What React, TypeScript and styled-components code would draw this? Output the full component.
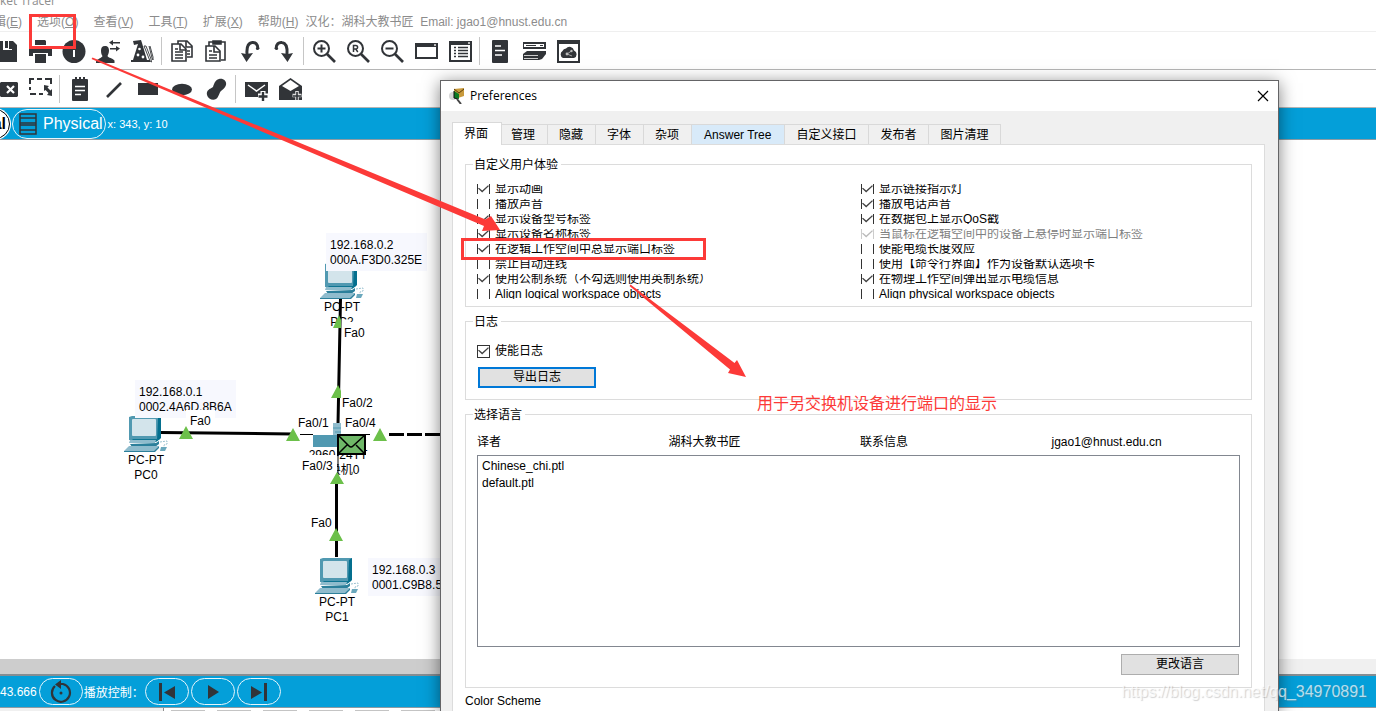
import React from 'react';
import styled, { createGlobalStyle, css } from 'styled-components';

const INK = '#313438';
const BLUE = '#049fd9';
const RED = '#fc3a38';
const SANS = '"Liberation Sans", "Noto Sans CJK SC", sans-serif';

const GlobalStyle = createGlobalStyle`
  * { box-sizing: border-box; }
  body { margin: 0; font-family: ${SANS}; font-size: 12px; color: #000; background: #fff; }
  button, input, select { font: inherit; color: inherit; margin: 0; }
`;

const Screen = styled.div`
  position: relative;
  display: flex;
  flex-direction: column;
  height: 100vh;
  overflow: hidden;
`;

/* ---------- main window ---------- */

const WindowTitle = styled.div`
  flex: none;
  display: flex;
  align-items: flex-end;
  height: 11px;
  overflow: hidden;
  font: 12px/20px "Open Sans", sans-serif;
  color: #8f8f8f;
`;

const MenuBar = styled.nav`
  flex: none;
  display: flex;
  align-items: center;
  gap: 15px;
  height: 21px;
  margin-left: -18px;
  padding-top: 2px;
  line-height: 18px;
  white-space: nowrap;
  color: #8c8c8c;
  border-bottom: 1px solid #efefef;
`;

const MenuButton = styled.button`
  padding: 0;
  border: 0;
  background: none;
`;

const Credits = styled.span`
  margin-left: -8px;
  white-space: pre;
`;

const ToolBar = styled.div`
  flex: none;
  display: flex;
  align-items: center;
  height: 38px;
  margin-left: -6px;
  border-bottom: 1px solid #b5b5b5;
`;

const ToolGroup = styled.div`
  display: flex;
  align-items: center;
  gap: 10px;
  height: 28px;
  padding-right: 7px;
  & + & { padding-left: 8px; border-left: 1px solid #c6c6c6; }
`;

const ToolButton = styled.button`
  width: 24px;
  height: 24px;
  padding: 0;
  border: 0;
  background: none;
  svg { display: block; }
`;

const WorkspaceBar = styled.div`
  flex: none;
  display: flex;
  align-items: center;
  gap: 2px;
  height: 32px;
  background: ${BLUE};
  border-bottom: 1px solid #8d9ba3;
  color: #fff;
`;

const ModeButton = styled.button<{ $active?: boolean }>`
  display: flex;
  align-items: center;
  gap: 6px;
  height: 30px;
  padding: 0 2px 0 6px;
  border: 1px solid #e6f5fb;
  border-radius: 15px;
  background: none;
  font-size: 16px;
  ${p => p.$active && css`
    width: 90px;
    margin-left: -80px;
    padding-right: 3px;
    justify-content: flex-end;
    background: #fff;
    border-color: #000;
    box-shadow: 0 0 0 1px #fff;
    color: #000;
    font-weight: bold;
  `}
`;

const Coordinates = styled.span`
  font-size: 11px;
`;

const Canvas = styled.main`
  position: relative;
  flex: 1;
  overflow: hidden;
`;

const Links = styled.svg`
  position: absolute;
  top: 0;
  left: 0;
`;

const Device = styled.div<{ $x: number; $y: number }>`
  position: absolute;
  left: ${p => p.$x}px;
  top: ${p => p.$y}px;
  display: flex;
  flex-direction: column;
  align-items: center;
  width: 44px;
  line-height: 15px;
  white-space: nowrap;
  svg { display: block; margin-bottom: 1px; }
`;

const Note = styled.div<{ $x: number; $y: number }>`
  position: absolute;
  left: ${p => p.$x}px;
  top: ${p => p.$y}px;
  width: 101px;
  padding: 5px 4px 3px;
  line-height: 15px;
  white-space: nowrap;
  background: #f7f8fe;
`;

const Port = styled.span<{ $x: number; $y: number }>`
  position: absolute;
  left: ${p => p.$x}px;
  top: ${p => p.$y}px;
  padding: 0 4px;
  line-height: 22px;
  background: #fff;
`;

const ScrollTrack = styled.div`
  flex: none;
  height: 15px;
  background: #f0f0f0;
`;

const ScrollThumb = styled.div`
  width: 60%;
  height: 100%;
  background: #cdcdcd;
`;

const PlayBar = styled.div`
  flex: none;
  display: flex;
  align-items: center;
  gap: 2px;
  height: 33px;
  border-top: 2px solid #858d92;
  background: ${BLUE};
  color: #fff;
  white-space: nowrap;
`;

const RoundButton = styled.button`
  display: flex;
  align-items: center;
  justify-content: center;
  width: 44px;
  height: 27px;
  padding: 0;
  border: 1px solid #e6f5fb;
  border-radius: 14px;
  background: none;
`;

const PlayLabel = styled.span`
  width: 59px;
  margin-left: -1px;
`;

const DeviceTray = styled.div`
  flex: none;
  display: flex;
  height: 4px;
  border-top: 1px solid #8d9ba3;
`;

const TrayInfo = styled.div`
  width: 164px;
  background: #f0f0f0;
  border-right: 1px solid #8d8d8d;
`;

const TraySlots = styled.div`
  display: flex;
  align-items: flex-end;
  gap: 12px;
  padding-left: 7px;
`;

const Slot = styled.i`
  width: 34px;
  height: 1px;
  background: #c4c4c4;
`;

/* ---------- preferences window ---------- */

const Dialog = styled.section`
  position: absolute;
  top: 80px;
  right: 97px;
  bottom: 0;
  left: 440px;
  overflow: hidden;
  border: 1px solid #646466;
  border-bottom: 0;
  background: #f0f0f0;
  box-shadow: 0 3px 16px rgba(0, 0, 0, 0.5);
`;

const DialogTitle = styled.header`
  display: flex;
  align-items: center;
  gap: 5px;
  height: 30px;
  padding: 0 9px 0 8px;
  background: #fff;
  font: 12px/30px "Open Sans", "Noto Sans", sans-serif;
`;

const CloseButton = styled.button`
  display: flex;
  margin-left: auto;
  padding: 0;
  border: 0;
  background: none;
`;

const Tabs = styled.div`
  display: flex;
  align-items: flex-end;
  padding: 11px 0 0 11px;
`;

const Tab = styled.button<{ $hover?: boolean }>`
  height: 20px;
  padding: ${p => (p.$hover ? '1px 13px 0 12px' : '1px 12px 0 11px')};
  border: solid #d9d9d9;
  border-width: 1px 1px 0 0;
  background: ${p => (p.$hover ? '#d8eaf9' : '#f0f0f0')};
  line-height: 18px;
  &[aria-selected='true'] {
    position: relative;
    height: 23px;
    margin: 0 -2px -1px 0;
    padding: 0 13px 1px 11px;
    border-left-width: 1px;
    background: #fff;
  }
`;

const Panel = styled.div`
  margin: 0 13px 0 11px;
  padding: 10px 12px;
  border: 1px solid #dcdcdc;
  background: #fff;
`;

const Group = styled.fieldset<{ $top: number; $bottom: number }>`
  min-width: 0;
  margin: 0 0 5px;
  padding: ${p => p.$top}px 11px ${p => p.$bottom}px;
  border: 1px solid #dcdcdc;
`;

const Legend = styled.legend`
  margin-left: -4px;
  padding: 2px 3px 0 1px;
  line-height: 16px;
`;

const Options = styled.div`
  display: grid;
  grid-template-columns: 1fr 1fr;
  gap: 5px;
`;

const CheckLabel = styled.label<{ $clipped?: boolean; $disabled?: boolean }>`
  display: flex;
  align-items: center;
  gap: 5px;
  height: ${p => (p.$clipped ? 10 : 16)}px;
  overflow: hidden;
  line-height: 16px;
  white-space: nowrap;
  color: ${p => (p.$disabled ? '#808080' : '#000')};
`;

const Check = styled.input`
  appearance: none;
  flex: none;
  display: grid;
  place-content: center;
  width: 13px;
  height: 13px;
  border: 1px solid #333;
  background: #fff;
  &:checked::before {
    content: '';
    width: 11px;
    height: 9px;
    background: #444;
    clip-path: polygon(0 45%, 9% 36%, 38% 68%, 91% 8%, 100% 18%, 38% 90%);
  }
  &:disabled { border-color: #ccc; }
  &:disabled::before { background: #bbb; }
`;

const PushButton = styled.button<{ $focused?: boolean }>`
  display: block;
  width: 118px;
  height: 21px;
  padding: 0;
  border: ${p => (p.$focused ? '2px solid #0078d7' : '1px solid #adadad')};
  background: #e1e1e1;
  line-height: 17px;
`;

const LogActions = styled.div`
  padding: 8px 1px 0;
`;

const Translator = styled.div`
  display: grid;
  grid-template-columns: repeat(4, 1fr);
  gap: 3px;
  margin-bottom: 5px;
  line-height: 16px;
`;

const LanguageList = styled.select`
  display: block;
  width: 100%;
  height: 192px;
  padding: 2px 0;
  overflow: hidden;
  border: 1px solid #828790;
  border-radius: 0;
  background: #fff;
  outline: 0;
  option { padding: 1px 4px 0; height: 17px; line-height: 16px; }
`;

const LanguageActions = styled.div`
  display: flex;
  justify-content: flex-end;
  padding: 7px 1px 0;
`;

const SectionTitle = styled.div`
  line-height: 16px;
`;

/* ---------- marks over the page ---------- */

const Marks = styled.svg`
  position: absolute;
  top: 0;
  left: 0;
  pointer-events: none;
`;

const Remark = styled.p`
  position: absolute;
  top: 392px;
  left: 757px;
  margin: 0;
  color: ${RED};
  font-size: 16px;
  line-height: 24px;
`;

const Watermark = styled.span`
  position: absolute;
  right: 9px;
  bottom: 8px;
  font-size: 16px;
  line-height: 22px;
  color: rgba(255, 255, 255, 0.7);
  text-shadow: 1px 1px 1px rgba(120, 120, 120, 0.35);
`;

/* ---------- icons, all on a 24px grid ---------- */

const icons: Record<string, React.ReactNode> = {
  save: (<>
    <path d="M1 2h18l4 4v17H1z" /><path d="M9 2h9v9H9z" fill="#fff" /><path d="M11 2h3v7h-3zM15 2h3v8h-3z" />
  </>),
  print: (<>
    <path d="M7 1h10l1 1v4H7z" /><path d="M1 7h23v10H1z" />
    <path d="M5 14h15v3H5z" fill="#fff" /><path d="M7 15h11v9H7z" /><circle cx="21" cy="9" r="1" fill="#fff" />
  </>),
  info: (<>
    <circle cx="12" cy="12.500" r="11.500" /><path d="M11 6h2v3h-2zM11 11h2v7h-2z" fill="#fff" />
  </>),
  user: (<>
    <path d="M9 7c3 0 4 2 4 4.500S12 16 11.500 17c1 2 5 2 7 4.500V24H0v-1.500C1 20 6 19 6.500 17 5.500 16 5 14 5 11.500S6 7 9 7z" />
    <path d="M13 3.500l4-2.500v2h7v1.500h-7v2zM24 9.500l-4-2.500v2h-6v1.500h6v2z" />
  </>),
  custom: (<>
    <path d="M3 2l8-1 1 3 5 17h3v2H1v-2h2l5-16-4 1z" />
    <circle cx="9.500" cy="10" r="1.300" fill="#fff" /><circle cx="8" cy="16" r="1.400" fill="#fff" /><circle cx="13" cy="18" r="1.400" fill="#fff" />
    <path d="M14 7l6 15 1.500 1-.5-3-5-13zM19 7l3 12 1 2v-3L20 7" fill="none" stroke={INK} strokeWidth=".9" />
  </>),
  copy: (
    <g fill="none" stroke={INK} strokeWidth="1.600">
      <path d="M8 5V2h9l5 5v11h-5" /><path d="M16 2v6h6" /><path d="M2 5h9l5 5v12H2z" fill="#fff" /><path d="M10 5v6h6M5 10h3M5 13h8M5 16h8M5 19h8M17 12h3M17 15h3" />
    </g>
  ),
  paste: (
    <g fill="none" stroke={INK} strokeWidth="1.600">
      <path d="M5 8V3h16v18h-4" /><path d="M9 2h8v3H9z" fill={INK} /><path d="M2 7h9l5 5v10H2z" fill="#fff" /><path d="M10 7v6h6M5 12h3M5 16h8M5 19h8" />
    </g>
  ),
  undo: (<>
    <path d="M20 10C20 5 17 3 14 3.500 10 4 8.500 8 9 15" fill="none" stroke={INK} strokeWidth="3" /><path d="M3 14l5 1 7-1-6.500 9z" /><circle cx="19.500" cy="9.500" r="1.600" />
  </>),
  redo: (<>
    <path d="M4 10C4 5 7 3 10 3.500c4 .5 5.500 4.500 5 11.500" fill="none" stroke={INK} strokeWidth="3" /><path d="M21 14l-5 1-7-1 6.500 9z" /><circle cx="4.500" cy="9.500" r="1.600" />
  </>),
  zoomIn: (
    <g fill="none" stroke={INK} strokeWidth="2"><circle cx="9.500" cy="9.500" r="7.500" /><path d="M15 15l8 8" strokeWidth="2.600" /><path d="M5.500 9.500h8M9.500 5.500v8" /></g>
  ),
  zoomReset: (
    <g fill="none" stroke={INK} strokeWidth="2">
      <circle cx="9.500" cy="9.500" r="7.500" /><path d="M15 15l8 8" strokeWidth="2.600" />
      <path d="M7.500 13V6.500h2.300a1.800 1.800 0 010 3.600H7.500M9.800 10.100l2 2.900" strokeWidth="1.500" />
    </g>
  ),
  zoomOut: (
    <g fill="none" stroke={INK} strokeWidth="2"><circle cx="9.500" cy="9.500" r="7.500" /><path d="M15 15l8 8" strokeWidth="2.600" /><path d="M5.500 9.500h8" /></g>
  ),
  windowIcon: (<>
    <path d="M1 4h23v16H1zM3 8v10h19V8z" fillRule="evenodd" /><path d="M20 5h2v2h-2z" fill="#bbb" />
  </>),
  listWindow: (<>
    <path d="M1 2h23v21H1zM3 6v15h19V6z" fillRule="evenodd" /><path d="M20 3h2v2h-2z" fill="#bbb" />
    <path d="M6 8.500h2M10 8.500h10M6 11.500h2M10 11.500h10M6 14.500h2M10 14.500h10M6 17.500h2M10 17.500h10" stroke={INK} strokeWidth="1.400" />
  </>),
  doc: (<>
    <rect x="4" y="1" width="16" height="23" rx="1" /><path d="M7 7h6M7 11.500h10M7 16h7" stroke="#fff" strokeWidth="1.600" />
  </>),
  devices: (<>
    <path d="M1 3h23v7H1zM2 5v3h20V5z" fillRule="evenodd" /><path d="M4 6h10v1H4zM18 6h3v1h-3z" />
    <path d="M5 12h19v3l-4 5-3 1H1v-6z" /><path d="M2 16h14v1H2zM2 19h14v1H2z" fill="#ccc" />
  </>),
  cloud: (<>
    <path d="M1 1h23v23H1zM3 5v17h19V5z" fillRule="evenodd" />
    <path d="M7 19a4 4 0 01-.5-7A4 4 0 0110 9.500a4.500 4.500 0 018 2 4 4 0 010 7.500z" /><circle cx="11" cy="15" r="1.400" fill="#bbb" /><circle cx="15.500" cy="12" r="1.200" fill="#bbb" /><path d="M11 15l4.500-3M11 15l5 2" stroke="#bbb" strokeWidth=".8" />
  </>),
  remove: (<>
    <path d="M7 5h16l1 1v13l-1 1H7l-7-7.500z" /><path d="M13 9l7 7M20 9l-7 7" stroke="#fff" strokeWidth="2.200" />
  </>),
  select: (<>
    <path d="M2 7V2h4M9 2h5M17 2h6v5M2 10v3M2 17h6M11 17h4" fill="none" stroke={INK} strokeWidth="2" />
    <path d="M16 8l5 1-1.500 1.500 3 3L24 12v7l-5-1 1.500-2-3-3L16 14z" />
  </>),
  note: (<>
    <rect x="4" y="2" width="16" height="22" rx="1" /><path d="M7 0h2v4H7zM11 0h2v4h-2zM15 0h2v4h-2z" /><path d="M7 9.500h10M7 13.500h10M7 17.500h6" stroke="#fff" strokeWidth="1.600" />
  </>),
  line: <path d="M5 20L19 6" stroke={INK} strokeWidth="2.600" />,
  rect: <path d="M2 6h20v12H2z" />,
  ellipse: <ellipse cx="12" cy="12.500" rx="10" ry="5.700" />,
  blob: <path d="M15 2c4-1 8 2 7 6-1 3-3 4-5 6s-2 6-5 8-8 0-9-4c-1-5 3-6 6-8 1-3 2-7 6-8z" />,
  mail: (<>
    <path d="M1 5h23v15H1z" /><path d="M4 8l8.500 6L21 8" fill="none" stroke="#fff" strokeWidth="1.500" />
    <path d="M19 14v10M14 19h10" stroke="#fff" strokeWidth="5" /><path d="M19 15v9M14.500 19.500h9" stroke={INK} strokeWidth="2.400" />
  </>),
  mailOpen: (<>
    <path d="M1 9L12.500 1 24 9v14H1z" /><path d="M4 9l8.500-6L21 9l-8.500 5z" fill="#fff" />
    <path d="M19 14v9M14.500 18.500h9" stroke="#ddd" strokeWidth="3.600" /><path d="M19 15v8M15 19h8" stroke={INK} strokeWidth="1.600" />
  </>),
};

const topTools = [
  ['save', 'print', 'info', 'user', 'custom'],
  ['copy', 'paste', 'undo', 'redo'],
  ['zoomIn', 'zoomReset', 'zoomOut', 'windowIcon', 'listWindow'],
  ['doc', 'devices', 'cloud'],
];
const drawTools = [['remove', 'select'], ['note', 'line', 'rect', 'ellipse', 'blob'], ['mail', 'mailOpen']];

const Tools = ({ groups }: { groups: string[][] }) => (
  <ToolBar role="toolbar">
    {groups.map(group => (
      <ToolGroup key={group[0]}>
        {group.map(name => (
          <ToolButton key={name} aria-label={name}>
            <svg width="24" height="24" viewBox="0 0 24 24" fill={INK}>{icons[name]}</svg>
          </ToolButton>
        ))}
      </ToolGroup>
    ))}
  </ToolBar>
);

const PcIcon = () => (
  <svg width="44" height="37" viewBox="0 0 44 37">
    <path d="M5 2l3-1h29v22l-3 2H5z" fill="#5199b1" />
    <path d="M34 3l3-2v22l-4 3z" fill="#046f8e" />
    <rect x="8" y="4" width="24" height="17" rx="1" fill="#d3e4eb" />
    <path d="M9 24h27l-4 3H6z" fill="#0e7592" />
    <path d="M6 25h26l-1 3H5z" fill="#8fbccd" />
    <path d="M6 29l26-1 3-2v3l-4 3H8z" fill="#2c809b" />
    <path d="M5 31h30l-4 5H0z" fill="#8fbccd" />
    <path d="M35 31v2l-4 4H0v-1h30z" fill="#2c809b" />
    <path d="M37 32h6l-2 4h-5z" fill="#6aa8bd" />
    <path d="M36 27l7-1v3l-3 1v2" fill="none" stroke="#9cc3d1" strokeDasharray="2 1" />
  </svg>
);

const menus: [string, string][] = [['编辑', 'E'], ['选项', 'O'], ['查看', 'V'], ['工具', 'T'], ['扩展', 'X'], ['帮助', 'H']];
const tabs = ['界面', '管理', '隐藏', '字体', '杂项', 'Answer Tree', '自定义接口', '发布者', '图片清理'];

const options: { text: string; on?: boolean; off?: boolean }[] = [
  { text: '显示动画', on: true }, { text: '显示链接指示灯', on: true },
  { text: '播放声音' }, { text: '播放电话声音', on: true },
  { text: '显示设备型号标签', on: true }, { text: '在数据包上显示QoS戳', on: true },
  { text: '显示设备名称标签', on: true }, { text: '当鼠标在逻辑空间中的设备上悬停时显示端口标签', on: true, off: true },
  { text: '在逻辑工作空间中总显示端口标签', on: true }, { text: '使能电缆长度效应' },
  { text: '禁止自动连线' }, { text: '使用【命令行界面】作为设备默认选项卡' },
  { text: '使用公制系统（不勾选则使用英制系统）', on: true }, { text: '在物理工作空间弹出显示电缆信息', on: true },
  { text: 'Align logical workspace objects' }, { text: 'Align physical workspace objects' },
];

const Topology = () => (
  <Canvas>
    <Device $x={320} $y={122}><PcIcon /><span>PC-PT</span><span>PC2</span></Device>
    <Device $x={124} $y={275}><PcIcon /><span>PC-PT</span><span>PC0</span></Device>
    <Device $x={315} $y={417}><PcIcon /><span>PC-PT</span><span>PC1</span></Device>
    <Device $x={316} $y={283}>
      <svg width="50" height="24" viewBox="0 0 50 24">
        <path d="M0 12h28v12H0z" fill="#5199b1" />
        <path d="M20 0h8v12h-8z" fill="#8fbccd" /><path d="M20 5h8M22 9h6" stroke="#5199b1" />
      </svg>
      <span>2960-24TT</span><span>交换机0</span>
    </Device>
    <Note $x={326} $y={93}>192.168.0.2<br />000A.F3D0.325E</Note>
    <Note $x={135} $y={240}>192.168.0.1<br />0002.4A6D.8B6A</Note>
    <Note $x={368} $y={418}>192.168.0.3<br />0001.C9B8.5A21</Note>
    <Port $x={340} $y={182}>Fa0</Port>
    <Port $x={338} $y={252}>Fa0/2</Port>
    <Port $x={294} $y={272}>Fa0/1</Port>
    <Port $x={341} $y={272}>Fa0/4</Port>
    <Port $x={186} $y={270}>Fa0</Port>
    <Port $x={298} $y={315}>Fa0/3</Port>
    <Port $x={307} $y={372}>Fa0</Port>
    <Links width="480" height="518" viewBox="0 140 480 518">
      <g stroke="#000" strokeWidth="3" fill="none">
        <path d="M340.500 299L338 424M161 432.500L293 434M336.500 557V480" />
        <path d="M300 434.500h13M338 484v-30M366 434.500h4" strokeWidth="1" />
        <path d="M389 434.500h60" strokeDasharray="15 3" />
      </g>
      <path d="M333 423h8v12h-8z" fill="#8fbccd" />
      <path d="M333 428h8M335 432h6" stroke="#5199b1" />
      <g fill="#6cc04a">
        <path d="M186 426l7 13h-14zM293 428l7 13h-14zM380 428l7 13h-14zM337 472l7 12h-14zM336 528l7 13h-14z" />
        <path d="M338 385l3 6v7h-10zM339 315l2 5v8h-8z" />
      </g>
      <rect x="338" y="435" width="27" height="19" fill="#6fb868" stroke="#000" strokeWidth="2" />
      <path d="M338 435l11 11q2 2 4 0l12-11M338 454l9-9M365 454l-9-9" fill="none" stroke="#000" strokeWidth="1.500" />
    </Links>
  </Canvas>
);

const Preferences = () => (
  <Dialog aria-label="Preferences">
    <DialogTitle>
      <svg width="16" height="16" viewBox="0 0 16 16">
        <circle cx="4" cy="8" r="4" fill="#d6d6d6" />
        <path d="M5 1l10-1v8l-6 2-4-3z" fill="#c89a3c" /><path d="M5 1l5 4 5-4" fill="none" stroke="#5b3d0c" />
        <path d="M5 3l5 3v5l-5-1z" fill="#0c7a22" /><path d="M5 3v7l4 1" fill="none" stroke="#111" />
        <path d="M8 11l4 5" stroke="#444" strokeWidth="2" />
      </svg>
      Preferences
      <CloseButton aria-label="Close">
        <svg width="12" height="12" viewBox="0 0 12 12"><path d="M1 1l10 10M11 1L1 11" stroke="#000" strokeWidth="1.200" /></svg>
      </CloseButton>
    </DialogTitle>
    <Tabs role="tablist">
      {tabs.map((name, i) => (
        <Tab key={name} role="tab" aria-selected={i === 0} $hover={name === 'Answer Tree'}>{name}</Tab>
      ))}
    </Tabs>
    <Panel>
      <Group $top={11} $bottom={7}>
        <Legend>自定义用户体验</Legend>
        <Options>
          {options.map(o => (
            <CheckLabel key={o.text} $clipped $disabled={o.off}>
              <Check type="checkbox" defaultChecked={o.on} disabled={o.off} />
              {o.text}
            </CheckLabel>
          ))}
        </Options>
      </Group>
      <Group $top={13} $bottom={11}>
        <Legend>日志</Legend>
        <CheckLabel><Check type="checkbox" defaultChecked />使能日志</CheckLabel>
        <LogActions><PushButton $focused>导出日志</PushButton></LogActions>
      </Group>
      <Group $top={11} $bottom={12}>
        <Legend>选择语言</Legend>
        <Translator>
          <span>译者</span><span>湖科大教书匠</span><span>联系信息</span><span>jgao1@hnust.edu.cn</span>
        </Translator>
        <LanguageList size={8} aria-label="选择语言">
          <option>Chinese_chi.ptl</option>
          <option>default.ptl</option>
        </LanguageList>
        <LanguageActions><PushButton>更改语言</PushButton></LanguageActions>
      </Group>
      <SectionTitle>Color Scheme</SectionTitle>
    </Panel>
  </Dialog>
);

export default function App() {
  return (
    <>
      <GlobalStyle />
      <Screen>
        <WindowTitle>ket Tracer</WindowTitle>
        <MenuBar>
          {menus.map(([name, key]) => (
            <MenuButton key={key}>{name}(<u>{key}</u>)</MenuButton>
          ))}
          <Credits>汉化：湖科大教书匠  Email: jgao1@hnust.edu.cn</Credits>
        </MenuBar>
        <Tools groups={topTools} />
        <Tools groups={drawTools} />
        <WorkspaceBar>
          <ModeButton $active>Logical</ModeButton>
          <ModeButton>
            <svg width="18" height="22" viewBox="0 0 18 22">
              <path d="M1 1h16v20H1zM1 5h16M1 10h16M1 12h16M1 17h16" fill="none" stroke={INK} strokeWidth="1.500" />
            </svg>
            Physical
          </ModeButton>
          <Coordinates>x: 343, y: 10</Coordinates>
        </WorkspaceBar>
        <Topology />
        <ScrollTrack><ScrollThumb /></ScrollTrack>
        <PlayBar>
          <span>43.666</span>
          <RoundButton aria-label="Reset">
            <svg width="22" height="24" viewBox="0 0 22 24">
              <path d="M5 6a9 9 0 1 0 8-2H9" fill="none" stroke={INK} strokeWidth="2.200" />
              <path d="M5 4.500L11 0v9z" fill={INK} /><circle cx="11" cy="13" r="1.500" fill={INK} />
            </svg>
          </RoundButton>
          <PlayLabel>播放控制：</PlayLabel>
          <RoundButton aria-label="Back">
            <svg width="18" height="20" viewBox="0 0 18 20" fill={INK}><path d="M1 1h3v18H1zM17 4v13L6 10.500z" /></svg>
          </RoundButton>
          <RoundButton aria-label="Play">
            <svg width="12" height="14" viewBox="0 0 12 14" fill={INK}><path d="M1 0l11 7-11 7z" /></svg>
          </RoundButton>
          <RoundButton aria-label="Forward">
            <svg width="18" height="20" viewBox="0 0 18 20" fill={INK}><path d="M14 1h3v18h-3zM1 4v13l11-6.500z" /></svg>
          </RoundButton>
        </PlayBar>
        <DeviceTray>
          <TrayInfo />
          <TraySlots><Slot /><Slot /><Slot /><Slot /><Slot /><Slot /></TraySlots>
        </DeviceTray>
        <Preferences />
        <Marks width="1376" height="711" viewBox="0 0 1376 711">
          <g fill="none" stroke={RED} strokeWidth="3">
            <path d="M30.500 15.500h44v32h-44z" /><path d="M462.500 239.500h242v19h-242z" />
          </g>
          <g fill={RED}>
            <path d="M92.500 57.500L485.500 219.500 491 216l9 14-18 1 2-5L91.500 59z" />
            <path d="M630.500 284.500L734.500 363l2.500-3 9 17-18-4 2-3.500L629.500 286z" />
          </g>
        </Marks>
        <Remark>用于另交换机设备进行端口的显示</Remark>
        <Watermark>https://blog.csdn.net/qq_34970891</Watermark>
      </Screen>
    </>
  );
}
